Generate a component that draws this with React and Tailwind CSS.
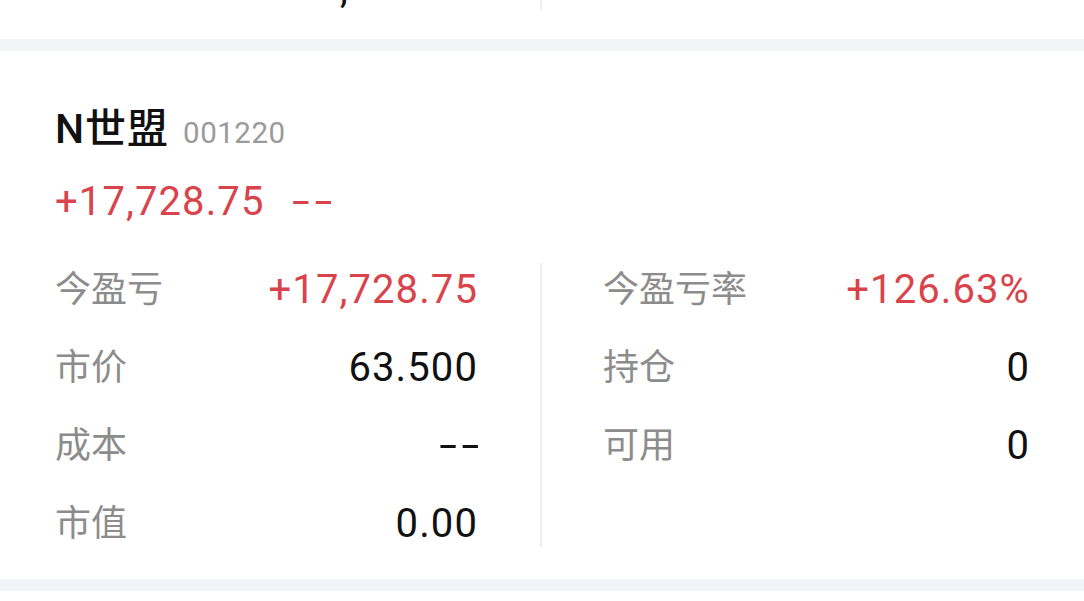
import React from 'react';

const font = { fontFamily: 'Roboto, "Noto Sans CJK SC", sans-serif' };

const leftRows = [
  { label: '今盈亏', value: '+17,728.75', red: true },
  { label: '市价', value: '63.500' },
  { label: '成本', value: '--', dash: true },
  { label: '市值', value: '0.00' },
];

const rightRows = [
  { label: '今盈亏率', value: '+126.63%', red: true },
  { label: '持仓', value: '0' },
  { label: '可用', value: '0' },
];

const Dashes = ({ className = '' }) => (
  <span className={`inline-block scale-x-[1.6] tracking-[3px] ${className}`}>--</span>
);

const Row = ({ label, value, red, dash }) => (
  <div className="flex items-center justify-between h-[78px]">
    <span className="text-[36px] text-[#8c8c8c]">{label}</span>
    {dash ? (
      <Dashes className="origin-right text-[40px] text-[#111111] -mr-[7px]" />
    ) : (
      <span className={`text-[40px] tracking-[1.1px] -mr-[1px] ${red ? 'text-[#d9434b]' : 'text-[#111111]'}`}>{value}</span>
    )}
  </div>
);

const App = () => {
  return (
    <div className="w-[1084px] h-[601px] bg-white overflow-hidden" style={font}>
      {/* tail of the previous card */}
      <div className="h-[39px] flex overflow-hidden">
        <div className="w-[540px] pl-[340px]">
          <span className="block -mt-[31px] text-[40px] leading-none text-[#111111]">,</span>
        </div>
        <div className="w-[2px] h-[10px] bg-[#eeeeee]"></div>
      </div>
      <div className="h-[12px] bg-[#f3f4f7]"></div>

      {/* card */}
      <div className="h-[528px] pt-[58px] px-[55px]">
        <div className="flex items-baseline gap-[14px] h-[44px]">
          <span className="text-[41px] tracking-[1px] font-medium text-[#111111] leading-none">N世盟</span>
          <span className="text-[29.5px] text-[#9a9a9a] leading-none tracking-[0.5px]">001220</span>
        </div>
        <div className="flex items-center gap-[28px] h-[44px] mt-[27px] text-[40px] tracking-[1.1px] text-[#d9434b] leading-none">
          <span>+17,728.75</span>
          <Dashes className="origin-left" />
        </div>
        <div className="grid grid-cols-[485px_2px_1fr] mt-[39px]">
          <div className="pr-[63px] -mt-[12px]">
            {leftRows.map((r) => (
              <Row key={r.label} {...r} />
            ))}
          </div>
          <div className="bg-[#eeeeee] h-[284px]"></div>
          <div className="pl-[61px] -mt-[12px]">
            {rightRows.map((r) => (
              <Row key={r.label} {...r} />
            ))}
          </div>
        </div>
      </div>
      <div className="h-[12px] bg-[#f3f4f7]"></div>
    </div>
  );
};

export default App;
